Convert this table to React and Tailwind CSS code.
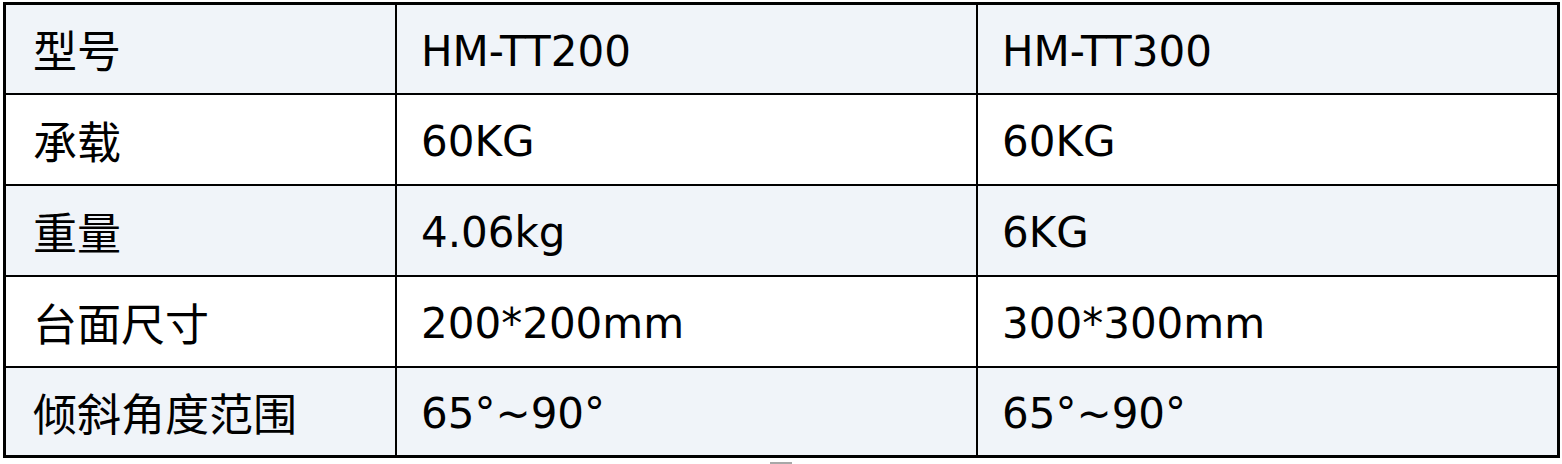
const rows = [
	['型号', 'HM-TT200', 'HM-TT300'],
	['承载', '60KG', '60KG'],
	['重量', '4.06kg', '6KG'],
	['台面尺寸', '200*200mm', '300*300mm'],
	['倾斜角度范围', '65°~90°', '65°~90°']
];

export default function App() {
	return (
		<div className="w-[1562px] h-[464px] bg-white overflow-hidden relative">
			<div className="pt-[2px] pl-[3px]">
				<div className="w-[1557px] border-[3px] border-black grid grid-cols-[389px_581px_581px]">
					{rows.map((row, i) => {
						const bg = i % 2 === 0 ? 'bg-[#f0f4f9]' : 'bg-white';
						const top = i > 0 ? 'border-t-2 border-black' : '';
						const h = i === 0 ? 'h-[88px]' : i === rows.length - 1 ? 'h-[89px]' : 'h-[91px]';
						return (
							<div key={i} className="contents">
								<div
									className={`${bg} ${top} ${h} flex items-center pl-[27px] text-[44px] text-black`}
									style={{ fontFamily: '"Noto Sans CJK SC", sans-serif' }}
								>
									{row[0]}
								</div>
								<div
									className={`${bg} ${top} ${h} border-l-2 border-l-black flex items-center pl-[24px] pt-[4px] text-[42px] text-black`}
									style={{ fontFamily: '"DejaVu Sans", sans-serif' }}
								>
									{row[1]}
								</div>
								<div
									className={`${bg} ${top} ${h} border-l-2 border-l-black flex items-center pl-[24px] pt-[4px] text-[42px] text-black`}
									style={{ fontFamily: '"DejaVu Sans", sans-serif' }}
								>
									{row[2]}
								</div>
							</div>
						);
					})}
				</div>
			</div>
			<div className="absolute left-[770px] top-[462px] w-[22px] h-[2px] bg-[#a8a8a8]" />
		</div>
	);
}
